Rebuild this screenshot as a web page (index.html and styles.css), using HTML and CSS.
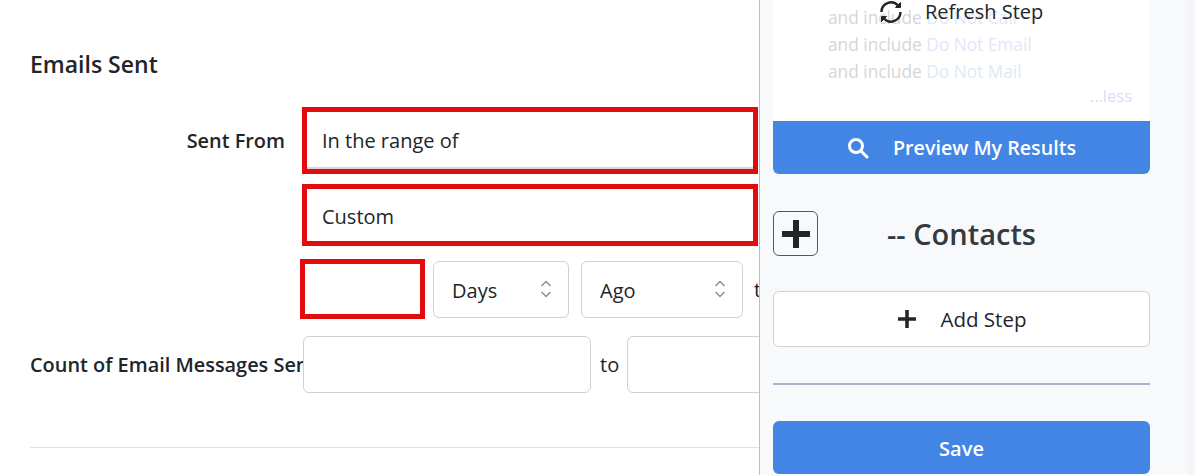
FILE: index.html
```html
<!DOCTYPE html>
<html lang="en">
<head>
  <meta charset="UTF-8">
  <title>Emails Sent</title>
  <link rel="stylesheet" href="styles.css">
</head>
<body>
  <div class="page">
    <div class="main">
      <h2 class="section-title">Emails Sent</h2>

      <div class="row row-first">
        <label class="row-label">Sent From</label>
        <div class="field field-error field-range">In the range of</div>
      </div>
      <div class="row row-second">
        <span class="row-label"></span>
        <div class="field field-error field-custom">Custom</div>
      </div>
      <div class="row row-third">
        <span class="row-label"></span>
        <div class="field field-error field-num"></div>
        <div class="field field-select field-days">Days
          <svg class="chevrons" width="12" height="20" viewBox="0 0 12 20"><path d="M1.500 7 6 2.500 10.500 7M1.500 13 6 17.500 10.500 13" fill="none" stroke="#8a9099" stroke-width="1.500"/></svg>
        </div>
        <div class="field field-select field-ago">Ago
          <svg class="chevrons" width="12" height="20" viewBox="0 0 12 20"><path d="M1.500 7 6 2.500 10.500 7M1.500 13 6 17.500 10.500 13" fill="none" stroke="#8a9099" stroke-width="1.500"/></svg>
        </div>
        <span class="to-clipped">to</span>
      </div>
      <div class="row row-count">
        <label class="row-label row-label-left">Count of Email Messages Sent</label>
        <div class="field field-count"></div>
        <span class="to-label">to</span>
        <div class="field field-count-end"></div>
      </div>
      <hr class="main-rule">
    </div>

    <div class="sidebar">
      <div class="summary">
        <div class="summary-line">and include <a>Do Not Call</a></div>
        <div class="summary-line">and include <a>Do Not Email</a></div>
        <div class="summary-line">and include <a>Do Not Mail</a></div>
        <div class="summary-less">...less</div>
        <div class="refresh">
          <svg width="24" height="24" viewBox="0 0 24 24" fill="none" stroke="#212529" stroke-width="2.400">
            <path d="M2.500 12A9.500 9.500 0 0 1 19 5.500"/>
            <path d="M21.500 12A9.500 9.500 0 0 1 5 18.500"/>
            <path d="M21.500 2.500v5h-5z" fill="#212529" stroke-width="1"/>
            <path d="M2.500 21.500v-5h5z" fill="#212529" stroke-width="1"/>
          </svg>
          <span>Refresh Step</span>
        </div>
      </div>
      <button class="btn-preview">
        <svg width="22" height="22" viewBox="0 0 22 22" fill="none" stroke="#fff" stroke-width="3"><circle cx="9" cy="9" r="6.500"/><path d="M14 14l6 6" stroke-linecap="round"/></svg>
        <span>Preview My Results</span>
      </button>

      <div class="group-head">
        <div class="plus-box">
          <svg width="32" height="32" viewBox="0 0 32 32"><path d="M16 2v28M2 16h28" stroke="#212529" stroke-width="6"/></svg>
        </div>
        <h3 class="group-title">-- Contacts</h3>
      </div>

      <button class="btn-add">
        <svg width="20" height="20" viewBox="0 0 20 20"><path d="M10 1v18M1 10h18" stroke="#212529" stroke-width="3.500"/></svg>
        <span>Add Step</span>
      </button>

      <hr class="side-rule">

      <button class="btn-save">Save</button>
    </div>
  </div>
</body>
</html>
```

FILE: styles.css
```css
:root {
  --text: #212529;
  --blue: #4285e4;
  --red: #e30b0b;
  --line: #ced1d8;
}

body {
  margin: 0;
  height: 475px;
  overflow: hidden;
  background: #fff;
  color: var(--text);
  font-family: "Open Sans", "Noto Sans", sans-serif;
  font-size: 20px;
}

.page {
  display: flex;
  height: 475px;
}

.main {
  width: 759px;
  flex: none;
  box-sizing: border-box;
  padding-left: 30px;
  overflow: hidden;
}

.section-title {
  margin: 49px 0 0;
  font-size: 23px;
  line-height: 30px;
  font-weight: 600;
}

.row {
  display: flex;
  align-items: center;
}

.row-first { margin-top: 28px; }
.row-second { margin-top: 10px; }
.row-third { margin-top: 13px; }
.row-count { margin-top: 17px; }

.row-label {
  width: 255px;
  flex: none;
  padding-right: 17px;
  text-align: right;
  font-weight: 600;
  font-size: 19.900px;
  white-space: nowrap;
}

.row-label-left {
  width: 273px;
  padding-right: 0;
  overflow: hidden;
  text-align: left;
}

.field {
  box-sizing: border-box;
  flex: none;
  display: flex;
  align-items: center;
  background: #fff;
  border: 1px solid var(--line);
  border-radius: 6px;
}

.field-error {
  border: 5px solid var(--red);
  border-radius: 0;
  padding-left: 15px;
}

.field-range {
  width: 456px;
  height: 67px;
  box-shadow: inset 0 -2px 0 #d5d7db;
}

.field-custom {
  width: 456px;
  height: 62px;
  padding-top: 3px;
}

.field-num {
  width: 125px;
  height: 60px;
  margin-left: -2px;
}

.field-select {
  position: relative;
  height: 57px;
  padding: 3px 0 0 18px;
}

.field-days { width: 136px; margin-left: 8px; }
.field-ago { width: 162px; margin-left: 12px; }

.chevrons {
  position: absolute;
  right: 16px;
  top: 17px;
}

.to-clipped { margin-left: 11px; }

.field-count {
  width: 288px;
  height: 57px;
}

.to-label {
  width: 36px;
  flex: none;
  padding-left: 9px;
  box-sizing: border-box;
}

.field-count-end {
  width: 200px;
  height: 57px;
}

.main-rule {
  margin: 54px 0 0;
  border: 0;
  border-top: 1px solid #dfe1e4;
}

.sidebar {
  flex: 1;
  box-sizing: border-box;
  padding: 0 45px 0 13px;
  border-left: 1px solid #b9c0cc;
  background: #f8f9fb;
  box-shadow: inset -7px 0 0 #f3f5f9;
}

.summary {
  position: relative;
  height: 121px;
  box-sizing: border-box;
  padding: 4px 18px 0 55px;
  background: #fff;
  color: #d6d6d6;
  font-size: 17.300px;
  line-height: 27px;
}

.summary a { color: #e1e8f8; }

.summary-less {
  margin-top: -3px;
  text-align: right;
  color: #d3e0f7;
  font-size: 16.500px;
}

.refresh {
  position: absolute;
  top: -2px;
  left: 106px;
  display: flex;
  align-items: center;
  gap: 22px;
  color: var(--text);
  font-size: 20px;
  font-weight: 500;
}

.btn-preview,
.btn-add,
.btn-save {
  display: flex;
  align-items: center;
  justify-content: center;
  width: 100%;
  box-sizing: border-box;
  font-family: inherit;
  font-weight: 600;
}

.btn-preview {
  height: 53px;
  gap: 24px;
  border: 0;
  border-radius: 0 0 6px 6px;
  background: var(--blue);
  color: #fff;
  font-size: 19.700px;
}

.group-head {
  display: flex;
  align-items: center;
  margin-top: 37px;
}

.plus-box {
  box-sizing: border-box;
  width: 45px;
  height: 45px;
  display: flex;
  align-items: center;
  justify-content: center;
  border: 1px solid #53575c;
  border-radius: 6px;
}

.group-title {
  flex: 1;
  margin: 0;
  padding-right: 45px;
  text-align: center;
  font-size: 29px;
  line-height: 42px;
  font-weight: 600;
  color: #343a40;
}

.btn-add {
  height: 56px;
  margin-top: 35px;
  padding-bottom: 2px;
  gap: 24px;
  border: 1px solid var(--line);
  border-radius: 6px;
  background: #fff;
  color: var(--text);
  font-size: 20.500px;
  font-weight: 500;
}

.side-rule {
  margin: 36px 0 0;
  border: 0;
  border-top: 2px solid #adb3c6;
}

.btn-save {
  height: 53px;
  margin-top: 36px;
  padding-top: 2px;
  border: 0;
  border-radius: 6px;
  background: var(--blue);
  color: #fff;
  font-size: 20px;
}
```
